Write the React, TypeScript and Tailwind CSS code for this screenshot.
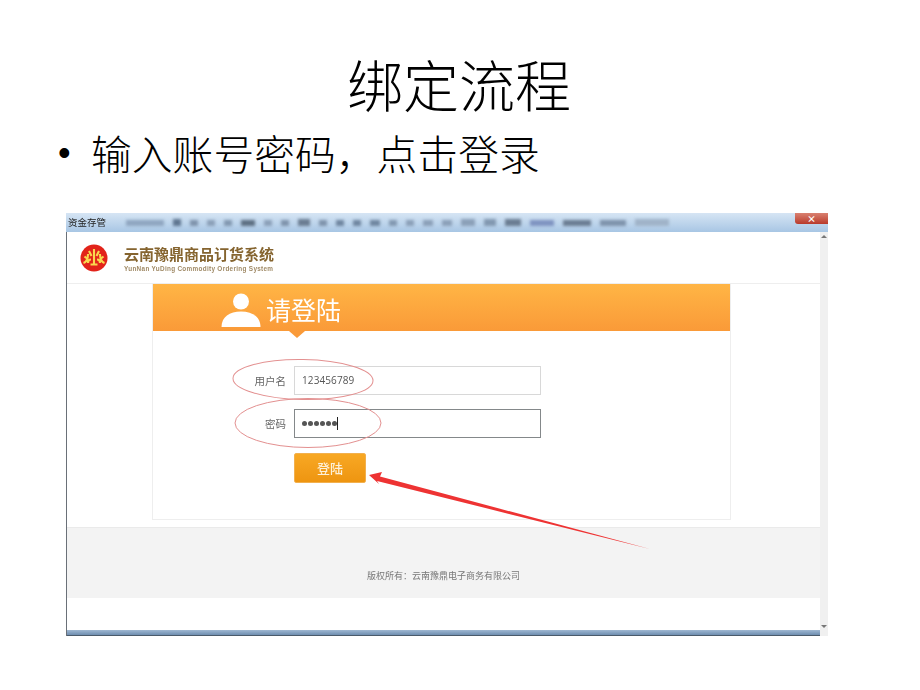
const cjk = "font-['Noto_Sans_CJK_SC','Noto_Sans',sans-serif]";

const toolbarBits = [
  [8, 38, "#8fa6c0"], [20, 8, "#5f7690"], [14, 8, "#7f93ab"], [8, 8, "#8ba0b8"], [10, 8, "#8298b0"],
  [12, 14, "#5d6f82"], [14, 8, "#8ba0b8"], [8, 8, "#7f93ab"], [16, 12, "#6b7d92"], [6, 8, "#7f93ab"],
  [5, 8, "#6f86a0"], [6, 8, "#6f86a0"], [5, 10, "#6f86a0"], [6, 8, "#8298b0"], [12, 8, "#8ba0b8"],
  [12, 10, "#8ba0b8"], [12, 10, "#8ba0b8"], [24, 14, "#8ba0b8"], [18, 12, "#8298b0"], [18, 16, "#6b7d92"],
  [14, 24, "#7f93c0"], [14, 28, "#6b7d92"], [14, 26, "#7f93ab"], [22, 34, "#a0b3c8"],
] as const;

function Logo() {
  return (
    <svg width="28" height="28" viewBox="0 0 28 28" className="shrink-0">
      <circle cx="14" cy="14" r="13.5" fill="#e2231a" />
      <g fill="none" stroke="#f9d84e" strokeWidth="2.1">
        <path d="M3.500 19c3-1 4.500-3.500 4.500-9M8 19c0-2.500 1-3.500 3-3.500M4.500 12.500l2.500 2M9 7l2.500 5" />
        <path d="M24.500 19c-3-1-4.500-3.500-4.500-9M20 19c0-2.500-1-3.500-3-3.500M23.500 12.500l-2.500 2M19 7l-2.500 5" />
        <path d="M14 5v15M10.500 20.500h7" />
      </g>
    </svg>
  );
}

function Annotations() {
  return (
    <svg className="absolute inset-0 pointer-events-none" width="920" height="690" viewBox="0 0 920 690">
      <ellipse cx="303" cy="379.5" rx="70" ry="20" fill="none" stroke="#e39090" strokeWidth="1" transform="rotate(1 303 379.5)" />
      <ellipse cx="308" cy="423" rx="73" ry="24.5" fill="none" stroke="#e39090" strokeWidth="1" />
      <polygon points="369,475 382,472 380,476.500 650,549 377,481 379,484" fill="#ee3333" />
    </svg>
  );
}

function Screenshot() {
  return (
    <div className={`mt-[38px] ml-[66px] w-[762px] h-[423px] flex flex-col ${cjk}`}>
      <div className="h-[19px] shrink-0 flex items-center bg-gradient-to-b from-[#d6e5f4] to-[#a8c6e4] relative">
        <span className="text-[9.5px] text-[#222] ml-0.5 w-[40px] shrink-0 blur-[0.3px]">资金存管</span>
        <div className="flex items-center gap-[9px] ml-[18px] blur-[1.5px]">
          {toolbarBits.map(([w, h, c], i) => (
            <div key={i} style={{ width: h, height: w > 14 ? 7 : 6, background: c }} />
          ))}
        </div>
        <div className="absolute right-0 top-0 w-[33px] h-[11px] rounded-bl-[3px] bg-gradient-to-b from-[#d98070] to-[#b8382a] flex items-center justify-center text-white text-[9px] font-bold leading-none">
          ×
        </div>
      </div>

      <div className="flex-1 flex min-h-0 border-l border-[#6a7078]">
        <div className="flex-1 flex flex-col min-w-0">
          <div className="h-[52px] shrink-0 flex items-center pl-[13px] border-b border-[#eeeeee] bg-white">
            <Logo />
            <div className="ml-[16px] pt-[2px] blur-[0.5px]">
              <div className="text-[15px] leading-[17px] font-bold text-[#85642f] whitespace-nowrap">云南豫鼎商品订货系统</div>
              <div className="text-[6.4px] leading-[9px] mt-[2px] font-['Liberation_Sans',sans-serif] font-bold text-[#a08a66] tracking-[0.3px] whitespace-nowrap">
                YunNan YuDing Commodity Ordering System
              </div>
            </div>
          </div>

          <div className="h-[243px] shrink-0 bg-white">
            <div className="ml-[85px] w-[579px] h-[236px] border-x border-b border-[#eeeeee] flex flex-col">
              <div className="relative h-[47px] shrink-0 pt-[4px] bg-gradient-to-b from-[#ffb545] to-[#fa9a38] flex items-center pl-[68px]">
                <svg width="40" height="34" viewBox="0 0 40 34" className="shrink-0">
                  <circle cx="20" cy="8.5" r="8" fill="#fff" />
                  <path d="M0.5 34c0-10 8-15.500 19.500-15.500s19.500 5.500 19.500 15.500z" fill="#fff" />
                </svg>
                <span className="ml-[5px] text-[25px] leading-none text-[#fff] blur-[0.4px]">请登陆</span>
                <div className="absolute left-[136px] top-[47px] w-0 h-0 border-x-[8px] border-x-transparent border-t-[7px] border-t-[#fa9a38]" />
              </div>

              <div className="pt-[35px] flex flex-col">
                <div className="flex items-center h-[29px]">
                  <span className="w-[133px] text-right text-[10.500px] text-[#666] shrink-0 blur-[0.3px]">用户名</span>
                  <div className="ml-[8px] w-[247px] h-[29px] border border-[#d8d8d8] flex items-center pl-[7px] text-[10px] text-[#555] font-['Open_Sans',sans-serif] tracking-[0.1px]">
                    <span className="blur-[0.3px]">123456789</span>
                  </div>
                </div>
                <div className="flex items-center h-[29px] mt-[14px]">
                  <span className="w-[133px] text-right text-[10.500px] text-[#666] shrink-0 blur-[0.3px]">密码</span>
                  <div className="ml-[8px] w-[247px] h-[29px] border border-[#84888a] flex items-center pl-[7px]">
                    <div className="flex gap-[1px]">
                      {[0, 1, 2, 3, 4, 5].map((i) => (
                        <span key={i} className="w-[5px] h-[5px] rounded-full bg-[#555]" />
                      ))}
                    </div>
                    <span className="w-px h-[13px] bg-[#222]" />
                  </div>
                </div>
                <div className="ml-[141px] mt-[15px] w-[72px] h-[30px] rounded-[2px] border border-[#f2b04e] bg-gradient-to-b from-[#f8a823] to-[#ee9510] flex items-center justify-center text-[13px] font-medium text-[#fdf0d8] blur-[0.4px]">
                  登陆
                </div>
              </div>
            </div>
          </div>

          <div className="h-[71px] shrink-0 bg-[#f3f3f3] border-t border-[#eaeaea] flex items-center justify-center pt-[25px]">
            <span className="text-[9px] text-[#777] blur-[0.3px]">版权所有：云南豫鼎电子商务有限公司</span>
          </div>

          <div className="flex-1 bg-white" />
          <div className="h-[6px] shrink-0 bg-gradient-to-b from-[#9fb8d2] to-[#6f8eb0] border-b border-[#4a5a6a]" />
        </div>

        <div className="w-[8px] shrink-0 bg-[#f0f0f0] flex flex-col justify-between items-center pt-[3px] pb-[8px]">
          <div className="w-0 h-0 border-x-[3px] border-x-transparent border-b-[3px] border-b-[#777]" />
          <div className="w-0 h-0 border-x-[3px] border-x-transparent border-t-[3px] border-t-[#777]" />
        </div>
      </div>
    </div>
  );
}

export default function App() {
  return (
    <div className={`relative w-[920px] h-[690px] bg-white overflow-hidden text-black ${cjk}`}>
      <h1 className="pt-[49px] pr-[2px] text-center text-[56px] leading-[68px] font-light">绑定流程</h1>
      <div className="mt-[14px] flex items-center h-[44px] pl-[58px]">
        <span className="w-[33px] font-['Liberation_Sans',sans-serif] text-[36px] leading-none">•</span>
        <span className="text-[40.800px] leading-[44px] font-light whitespace-nowrap">输入账号密码，点击登录</span>
      </div>
      <Screenshot />
      <Annotations />
    </div>
  );
}
